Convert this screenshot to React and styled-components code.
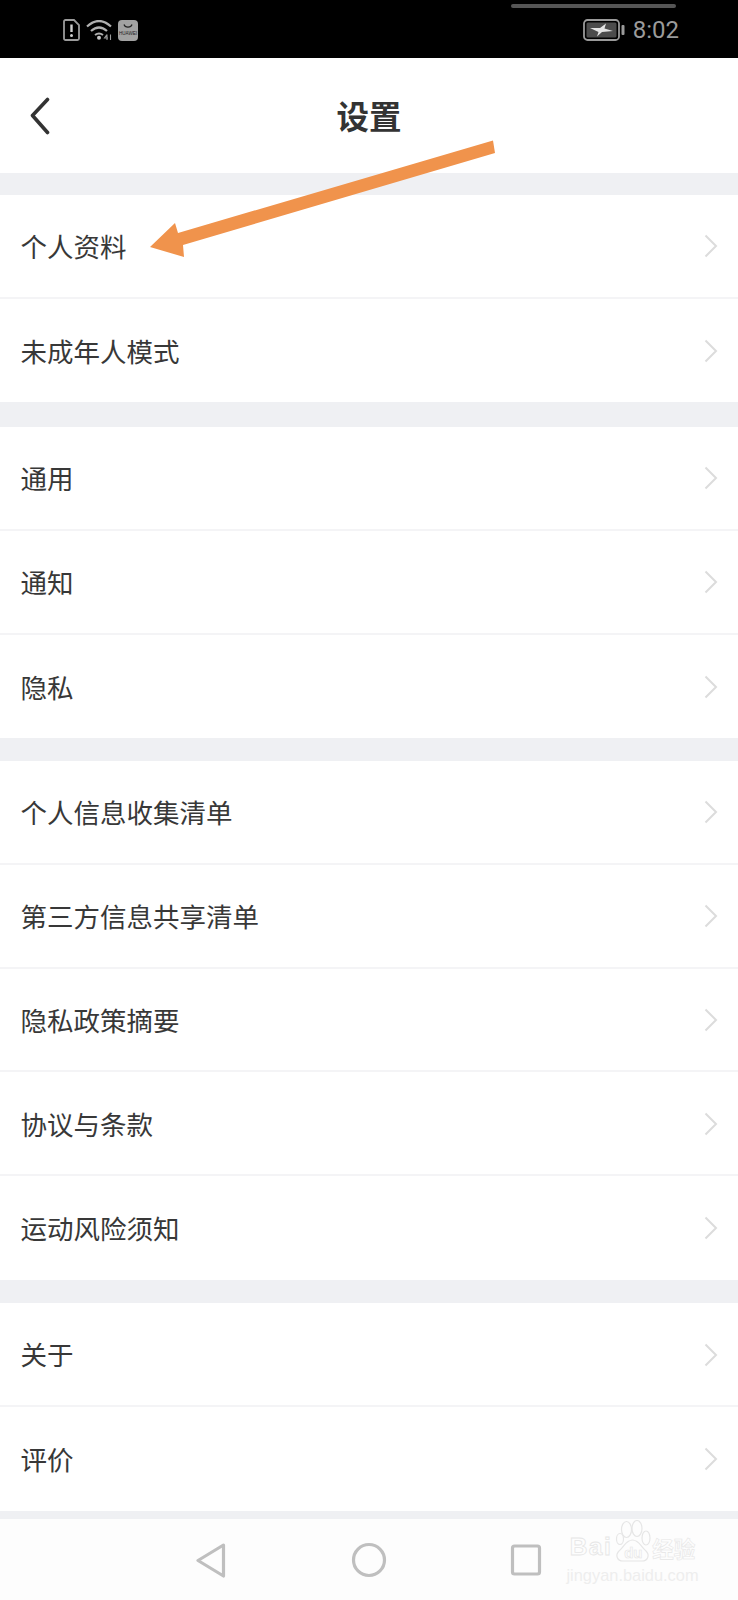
import React from 'react'
import styled, { createGlobalStyle } from 'styled-components'

const GlobalStyle = createGlobalStyle`
  html, body {
    margin: 0;
    padding: 0;
    background: #fff;
  }
  * {
    box-sizing: border-box;
  }
`

const Screen = styled.div`
  position: relative;
  width: 738px;
  height: 1600px;
  overflow: hidden;
  background: #eff0f3;
  font-family: "Noto Sans CJK SC", "Noto Sans", sans-serif;
`

const StatusBar = styled.div`
  position: relative;
  height: 58px;
  background: #000;
  display: flex;
  align-items: center;
  justify-content: space-between;
  padding: 2px 59px 0 63px;
`
const StatusGroup = styled.div`
  display: flex;
  align-items: center;
  gap: ${({ $gap }) => $gap}px;
`
const Clock = styled.span`
  font-family: Roboto, "Liberation Sans", sans-serif;
  font-size: 24px;
  color: #9a9a9a;
`
const NotchLine = styled.div`
  position: absolute;
  top: 4px;
  left: 511px;
  width: 165px;
  height: 4px;
  border-radius: 2px;
  background: #555;
`

const Header = styled.header`
  height: 115px;
  background: #fff;
  display: flex;
  align-items: center;
  justify-content: center;
  position: relative;
`
const BackIcon = styled.svg`
  position: absolute;
  left: 28px;
  top: 37px;
`
const Title = styled.h1`
  margin: 0 0 2px;
  font-size: 32.5px;
  font-weight: 700;
  color: #333;
`

const Group = styled.section`
  background: #fff;
  margin-top: ${({ $gap }) => $gap}px;
`
const Row = styled.div`
  height: 103.8px;
  display: flex;
  align-items: center;
  justify-content: space-between;
  padding: 1px 20px 0 20.5px;
  border-bottom: 2px solid #f4f4f6;
  &:last-child {
    height: 103.6px;
    border-bottom: none;
  }
`
const RowLabel = styled.span`
  font-size: 26.5px;
  line-height: 1;
  color: #383838;
`

const NavBar = styled.nav`
  position: absolute;
  left: 0;
  right: 0;
  bottom: 0;
  height: 81px;
  background: #fdfdfd;
  display: flex;
  align-items: center;
  justify-content: center;
`
const NavSlot = styled.div`
  width: 157px;
  display: flex;
  justify-content: center;
`

const Annotation = styled.svg`
  position: absolute;
  left: 0;
  top: 0;
  pointer-events: none;
`

const Watermark = styled.div`
  position: absolute;
  left: 565px;
  top: 1520px;
  width: 135px;
  font-family: "Liberation Sans", sans-serif;
  display: flex;
  flex-direction: column;
  align-items: center;
`
const MarkTop = styled.div`
  display: flex;
  align-items: flex-end;
  height: 42px;
`
const MarkName = styled.span`
  font-size: 24.5px;
  font-weight: 700;
  line-height: 24px;
  letter-spacing: 1.5px;
  margin-bottom: 3px;
  color: #fdfdfd;
  -webkit-text-stroke: 0.8px #e6e6e6;
`
const PawBox = styled.div`
  position: relative;
  width: 36px;
  height: 42px;
  margin: 0 1px 0 3px;
`
const PawText = styled.span`
  position: absolute;
  left: 0;
  right: 0;
  bottom: 1px;
  text-align: center;
  font-size: 15px;
  font-weight: 700;
  line-height: 17px;
  color: #fdfdfd;
  -webkit-text-stroke: 0.6px #e6e6e6;
`
const MarkCn = styled.span`
  font-family: "Noto Sans CJK SC", sans-serif;
  font-size: 21.5px;
  font-weight: 700;
  line-height: 24px;
  margin-bottom: 2px;
  color: #fdfdfd;
  -webkit-text-stroke: 0.6px #e6e6e6;
`
const MarkUrl = styled.div`
  font-size: 16.4px;
  line-height: 18px;
  margin-top: 4px;
  white-space: nowrap;
  color: #eeeeee;
`

const groups = [
  { gap: 22, rows: ['个人资料', '未成年人模式'] },
  { gap: 24.6, rows: ['通用', '通知', '隐私'] },
  { gap: 22.8, rows: ['个人信息收集清单', '第三方信息共享清单', '隐私政策摘要', '协议与条款', '运动风险须知'] },
  { gap: 23.4, rows: ['关于', '评价'] },
]

const Chevron = () => (
  <svg width="14" height="24" viewBox="0 0 14 24" fill="none">
    <path d="M1.5 1.5 L12 12 L1.5 22.5" stroke="#dcdcdc" strokeWidth="2" />
  </svg>
)

function App() {
  return (
    <Screen>
      <GlobalStyle />
      <StatusBar>
        <NotchLine />
        <StatusGroup $gap={6}>
          {/* sim card with warning mark */}
          <svg width="17" height="22" viewBox="0 0 17 22" fill="none">
            <path d="M2.5 1 H11 L16 6 V19.5 A1.5 1.5 0 0 1 14.5 21 H2.5 A1.5 1.5 0 0 1 1 19.5 V2.5 A1.5 1.5 0 0 1 2.5 1 Z" stroke="#9c9c9c" strokeWidth="1.8" />
            <path d="M8.5 5.5 V13" stroke="#d0d0d0" strokeWidth="2.4" />
            <circle cx="8.5" cy="16.5" r="1.5" fill="#d0d0d0" />
          </svg>
          {/* wifi with data arrows */}
          <svg width="26" height="21" viewBox="0 0 26 21" fill="none">
            <path d="M1 6.5 Q13 -4.5 25 6.5" stroke="#b0b0b0" strokeWidth="2.2" />
            <path d="M5 11 Q13 4 21 11" stroke="#b0b0b0" strokeWidth="2.2" />
            <path d="M9 15 Q13 12 17 15" stroke="#b0b0b0" strokeWidth="2" />
            <circle cx="13" cy="17.8" r="2" fill="#c4c4c4" />
            <path d="M21 14.5 L18.5 18 H22 M21 14.5 V20 M24.5 14.5 V20" stroke="#9a9a9a" strokeWidth="1.1" />
          </svg>
          {/* app gallery notification */}
          <svg width="20" height="21" viewBox="0 0 20 21">
            <rect width="20" height="21" rx="4" fill="#a2a2a2" />
            <path d="M6 4.5 C7 8 13 8 14 4.5" fill="none" stroke="#222" strokeWidth="1.2" />
            <text x="10" y="15" textAnchor="middle" fontSize="4.6" fontFamily="Liberation Sans, sans-serif" fill="#222">HUAWEI</text>
          </svg>
        </StatusGroup>
        <StatusGroup $gap={8}>
          {/* battery, charging */}
          <svg width="42" height="22" viewBox="0 0 42 22" fill="none">
            <rect x="1" y="1" width="35" height="20" rx="3.5" stroke="#9a9a9a" strokeWidth="1.8" />
            <rect x="3.5" y="3.5" width="30" height="15" rx="1.5" fill="#4c4c4c" />
            <path d="M7 9 L17 9 L23 4.5 L21.5 9.5 L30 12 L19 13 L14 17.5 L15.5 13 Z" fill="#e4e4e4" />
            <rect x="38.5" y="6" width="3" height="10" rx="1" fill="#9a9a9a" />
          </svg>
          <Clock>8:02</Clock>
        </StatusGroup>
      </StatusBar>

      <Header>
        <BackIcon width="24" height="40" viewBox="0 0 24 40" fill="none">
          <path d="M19.5 4.5 L4.5 20.5 L19.5 37.5" stroke="#333" strokeWidth="3.6" strokeLinecap="round" strokeLinejoin="round" />
        </BackIcon>
        <Title>设置</Title>
      </Header>

      {groups.map((group) => (
        <Group key={group.rows[0]} $gap={group.gap}>
          {group.rows.map((label) => (
            <Row key={label}>
              <RowLabel>{label}</RowLabel>
              <Chevron />
            </Row>
          ))}
        </Group>
      ))}

      <NavBar>
        <NavSlot>
          <svg width="32" height="36" viewBox="0 0 32 36" fill="none">
            <path d="M27.5 3 L2 18.5 L27.5 34 Z" stroke="#bfbfbf" strokeWidth="3.2" strokeLinejoin="round" />
          </svg>
        </NavSlot>
        <NavSlot>
          <svg width="36" height="36" viewBox="0 0 36 36" fill="none">
            <circle cx="18" cy="18" r="15.5" stroke="#bfbfbf" strokeWidth="3.2" />
          </svg>
        </NavSlot>
        <NavSlot>
          <svg width="32" height="32" viewBox="0 0 32 32" fill="none">
            <rect x="2.5" y="2" width="27" height="28" rx="2" stroke="#bfbfbf" strokeWidth="3.2" />
          </svg>
        </NavSlot>
      </NavBar>

      <Watermark>
        <MarkTop>
          <MarkName>Bai</MarkName>
          <PawBox>
            <svg width="36" height="42" viewBox="0 0 36 42" fill="none" stroke="#e6e6e6" strokeWidth="1.2">
              <ellipse cx="5" cy="19" rx="3.5" ry="5.5" />
              <ellipse cx="11.5" cy="9.5" rx="5" ry="8" />
              <ellipse cx="22" cy="8.5" rx="5" ry="8" />
              <ellipse cx="31" cy="18" rx="4" ry="7" />
              <path d="M17.5 20 C11 20 9 27 4 31 C0 35 2 41 8 41 H27 C33 41 35 35 31 31 C26 27 24 20 17.5 20 Z" />
            </svg>
            <PawText>du</PawText>
          </PawBox>
          <MarkCn>经验</MarkCn>
        </MarkTop>
        <MarkUrl>jingyan.baidu.com</MarkUrl>
      </Watermark>

      {/* callout arrow pointing at the first row */}
      <Annotation width="738" height="1600" viewBox="0 0 738 1600">
        <path
          d="M493 140.5 L495 153 L183 245 L184 257 L150 247 L175 223 L178 233 Z"
          fill="#f0934c"
        />
      </Annotation>
    </Screen>
  )
}

export default App
